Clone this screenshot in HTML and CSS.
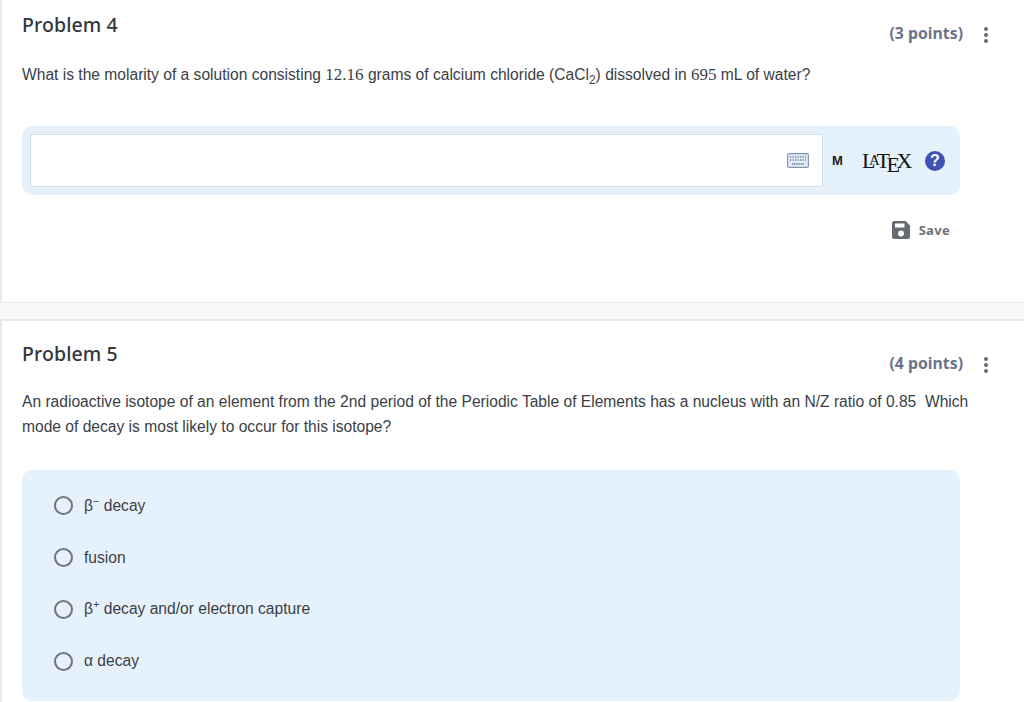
FILE: index.html
```html
<!DOCTYPE html>
<html lang="en">
<head>
<meta charset="utf-8">
<title>Problems</title>
<link rel="stylesheet" href="styles.css">
</head>
<body>
<section class="card card-first">
  <header class="head">
    <h2 class="title">Problem 4</h2>
    <div class="meta">
      <span class="points">(3 points)</span>
      <svg class="kebab" width="6" height="18" viewBox="0 0 6 18"><circle cx="3" cy="3" r="2"/><circle cx="3" cy="9" r="2"/><circle cx="3" cy="15" r="2"/></svg>
    </div>
  </header>
  <p class="text q4">What is the molarity of a solution consisting <span class="num">12.16</span> grams of calcium chloride (CaCl<sub>2</sub>) dissolved in <span class="num">695</span> mL of water?</p>
  <div class="answer">
    <div class="input">
      <svg class="kbd" width="22" height="15" viewBox="0 0 22 15">
        <rect x="0.6" y="0.6" width="20.8" height="13.8" rx="1.500" fill="#e3ecf5" stroke="#8199b4" stroke-width="1.2"/>
        <path d="M3 4h16M3 7h16" stroke="#6f86a1" stroke-width="1.3" stroke-dasharray="1.300 1.200"/>
        <path d="M5 11h12" stroke="#6f86a1" stroke-width="1.300" stroke-dasharray="1.300 .5"/>
      </svg>
    </div>
    <span class="m">M</span>
    <span class="latex">L<span class="la">A</span>T<span class="le">E</span>X</span>
    <span class="help">?</span>
  </div>
  <div class="save">
    <svg width="18" height="18" viewBox="0 0 18 18"><path fill="#666b73" fill-rule="evenodd" d="M2 0h11.500L18 4.500V16a2 2 0 0 1-2 2H2a2 2 0 0 1-2-2V2a2 2 0 0 1 2-2zM3 2.500v4h9.500v-4zM9 9.500a3 3 0 1 0 0 6 3 3 0 0 0 0-6z"/></svg>
    <span>Save</span>
  </div>
</section>
<section class="card card-second">
  <header class="head">
    <h2 class="title">Problem 5</h2>
    <div class="meta">
      <span class="points">(4 points)</span>
      <svg class="kebab" width="6" height="18" viewBox="0 0 6 18"><circle cx="3" cy="3" r="2"/><circle cx="3" cy="9" r="2"/><circle cx="3" cy="15" r="2"/></svg>
    </div>
  </header>
  <p class="text q5">An radioactive isotope of an element from the 2nd period of the Periodic Table of Elements has a nucleus with an N/Z ratio of 0.85&nbsp; Which mode of decay is most likely to occur for this isotope?</p>
  <div class="options">
    <label class="option"><span class="radio"></span><span>β<sup>−</sup> decay</span></label>
    <label class="option"><span class="radio"></span><span>fusion</span></label>
    <label class="option"><span class="radio"></span><span>β<sup>+</sup> decay and/or electron capture</span></label>
    <label class="option"><span class="radio"></span><span>α decay</span></label>
  </div>
</section>
</body>
</html>
```
FILE: styles.css
```css
* { box-sizing: border-box; }
html, body { margin: 0; height: 100%; overflow: hidden; }
body { background: #f7f8fa; font-family: "Liberation Sans", Arial, sans-serif; color: #3b4046; }
.card { background: #fff; border-left: 2px solid #e8e9eb; padding-left: 20px; padding-right: 64px; }
.card-first { height: 303px; border-bottom: 1px solid #e8e9eb; padding-top: 12px; }
.card-second { margin-top: 16px; height: 383px; border-top: 2px solid #e8e9eb; padding-top: 20px; }
.head { display: flex; justify-content: space-between; align-items: flex-start; position: relative; height: 26px; }
.title { margin: 0; font: 500 19.500px/26px "Noto Sans", sans-serif; color: #33373d; letter-spacing: 0.1px; }
.meta { display: flex; align-items: center; gap: 20px; position: absolute; right: -29px; top: 10px; }
.card-second .meta { top: 11px; }
.points { font: 700 15.800px/22px "Noto Sans", sans-serif; color: #6b7489; }
.kebab { fill: #666b73; margin-top: 4px; }
.text { margin: 0; font-size: 15.600px; line-height: 25px; }
.q4 { margin-top: 24px; }
.q5 { margin-top: 22px; width: 950px; }
.num { font-family: "Liberation Serif", serif; font-size: 17px; }
sub { font-size: 12px; line-height: 0; }
.answer { margin-top: 39px; width: 938px; height: 69px; background: #e6f2fb; border-radius: 10px; padding: 8px; display: flex; align-items: center; }
.input { width: 793px; height: 53px; background: #fff; border: 1px solid #d5dfe9; display: flex; align-items: center; justify-content: flex-end; padding-right: 13px; }
.kbd { display: block; }
.m { margin-left: 9px; font-size: 13px; font-weight: 700; color: #1c1c1c; width: 13px; }
.latex { margin-left: 17px; font-family: "Liberation Serif", serif; font-size: 22px; color: #111; display: inline-flex; letter-spacing: -1.400px; line-height: 20px; width: 52px; }
.la { font-size: 15px; margin-left: -5px; margin-right: -2px; position: relative; top: -1px; }
.le { position: relative; top: 4px; margin-left: -2px; margin-right: -2px; }
.help { margin-left: 11px; width: 20px; height: 20px; border-radius: 50%; background: #3f51b5; color: #fff; font-size: 16px; font-weight: 700; text-align: center; line-height: 20px; }
.save { margin-top: 25px; width: 928px; display: flex; justify-content: flex-end; align-items: center; gap: 9px; font: 700 13px/20px "Noto Sans", sans-serif; color: #6e737a; letter-spacing: 0.3px; }
.options { margin-top: 31px; width: 938px; height: 231px; background: #e6f2fb; border-radius: 10px; padding: 10px 32px; display: flex; flex-direction: column; }
.option { height: 51.800px; display: flex; align-items: center; gap: 11px; font-size: 15.600px; color: #3b4046; }
.option sup { font-size: 11px; line-height: 0; }
.radio { width: 19px; height: 19px; border: 2px solid #6f757c; border-radius: 50%; flex: none; }
```
